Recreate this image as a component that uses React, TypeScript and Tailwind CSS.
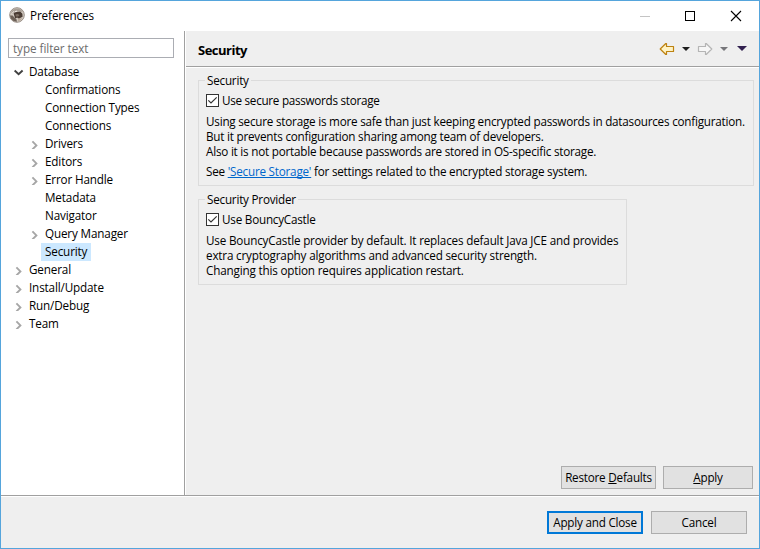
import React from "react";

function Chevron({ open = false }: { open?: boolean }) {
  return open ? (
    <svg width="10" height="10" viewBox="0 0 10 10" fill="none" stroke="#404040" strokeWidth="1.9" className="block">
      <path d="M.6 3.5 4.6 7.3 8.6 3.5" />
    </svg>
  ) : (
    <svg width="10" height="10" viewBox="0 0 10 10" fill="none" stroke="#a6a6a6" strokeWidth="1.9" className="block">
      <path d="M2.4 2.4 6.4 6.4 2.4 10.4" />
    </svg>
  );
}

type Item = { label: string; level: 0 | 1; state?: "open" | "closed"; selected?: boolean };

const items: Item[] = [
  { label: "Database", level: 0, state: "open" },
  { label: "Confirmations", level: 1 },
  { label: "Connection Types", level: 1 },
  { label: "Connections", level: 1 },
  { label: "Drivers", level: 1, state: "closed" },
  { label: "Editors", level: 1, state: "closed" },
  { label: "Error Handle", level: 1, state: "closed" },
  { label: "Metadata", level: 1 },
  { label: "Navigator", level: 1 },
  { label: "Query Manager", level: 1, state: "closed" },
  { label: "Security", level: 1, selected: true },
  { label: "General", level: 0, state: "closed" },
  { label: "Install/Update", level: 0, state: "closed" },
  { label: "Run/Debug", level: 0, state: "closed" },
  { label: "Team", level: 0, state: "closed" },
];

function TreeRow({ item }: { item: Item }) {
  return (
    <li className={`flex h-[18px] items-center ${item.level === 1 ? "pl-[29px]" : "pl-[13px]"}`}>
      <span className="w-[11px] shrink-0">{item.state && <Chevron open={item.state === "open"} />}</span>
      <span className={`h-[18px] px-1 leading-[16px] ${item.selected ? "w-[50px] bg-[#cce8ff]" : ""}`}>{item.label}</span>
    </li>
  );
}

function Checkbox({ label }: { label: string }) {
  return (
    <label className="flex h-[15px] items-center gap-[3px]">
      <svg width="13" height="13" viewBox="0 0 13 13" className="shrink-0">
        <rect x=".5" y=".5" width="12" height="12" fill="#fff" stroke="#333" />
        <path d="M2.3 6.3 5 9 10.7 3.3" fill="none" stroke="#333" strokeWidth="1.2" />
      </svg>
      <span>{label}</span>
    </label>
  );
}

function Group({ title, size, children }: { title: string; size: string; children: React.ReactNode }) {
  return (
    <fieldset className={`relative min-w-0 border border-[#dcdcdc] pl-[7px] ${size}`}>
      <legend className="absolute -top-[9px] left-[6px] bg-[#efefef] px-[2px] leading-[16px]">{title}</legend>
      {children}
    </fieldset>
  );
}

function Button({ children, size, primary }: { children: React.ReactNode; size: string; primary?: boolean }) {
  return (
    <button
      className={`flex h-[23px] items-center justify-center bg-[#e1e1e1] ${size} ${
        primary ? "border-2 border-[#0078d7]" : "border border-[#adadad]"
      }`}
    >
      {children}
    </button>
  );
}

function AppIcon() {
  return (
    <svg width="16" height="16" viewBox="0 0 16 16" className="mb-[2px] block">
      <circle cx="8" cy="8" r="7.3" fill="#d3cbc2" stroke="#9a9088" strokeWidth="1" />
      <path d="M2 5.5C3 3 5.4 1.6 8 1.6c2.6 0 4.8 1.4 5.8 3.6l-3-1-4 .3-3 2z" fill="#a89f96" />
      <path d="M4.6 6.6 6 5.2l5.2-.6 2.2 2.2.2 3-2 1-1.8 1.2-1.6-1.4-2 .8z" fill="#4a3c34" />
      <path d="M1 8.4l2.6.2 1.8 2 2 1.4.6 2.8-3.4-.8L1.8 11.6z" fill="#6c6057" />
      <path d="M6.4 7.6l2.2-.6 2 1-1.4 1.4H7z" fill="#7c6e63" />
      <path d="M8.6 11.2l2.6.2 2-.6-1.4 2.4-2.6 1z" fill="#b9aa9b" />
      <path d="M3.4 6 5 4.2M6 4.8l2-.8" stroke="#f1ece7" strokeWidth="1" />
    </svg>
  );
}

function Arrow({ right = false }: { right?: boolean }) {
  return (
    <svg width="16" height="14" viewBox="0 0 16 14" className={right ? "block -scale-x-100" : "block"}>
      <path
        d="M1.2 7 6.8 1.5H7.5V4.5H14.5V9.5H7.5V12.5H6.8Z"
        fill={right ? "#f7f7f7" : "#fff3c4"}
        stroke={right ? "#b5b5b5" : "#bd8211"}
        strokeWidth="1.2"
        strokeLinejoin="round"
      />
    </svg>
  );
}

function Caret({ fill, wide = false }: { fill: string; wide?: boolean }) {
  return wide ? (
    <svg width="10" height="5" viewBox="0 0 10 5" className="block"><path d="M0 0H10L5 5Z" fill={fill} /></svg>
  ) : (
    <svg width="8" height="4" viewBox="0 0 8 4" className="block"><path d="M0 0H8L4 4Z" fill={fill} /></svg>
  );
}

export default function App() {
  return (
    <div className="flex h-[549px] w-[760px] flex-col overflow-hidden border border-[#55a5dc] bg-[#efefef] font-['Open_Sans','Noto_Sans',sans-serif] text-[11.7px] leading-[15px] tracking-[-0.22px] whitespace-nowrap text-black">
      <header className="flex h-[30px] shrink-0 items-center bg-white pl-2">
        <AppIcon />
        <span className="-mt-px ml-[5px] tracking-[-0.1px]">Preferences</span>
        <svg width="110" height="12" viewBox="0 0 110 12" fill="none" className="-mt-px mr-[14px] ml-auto">
          <path d="M5 6.5h10" stroke="#c4c4c4" />
          <rect x="50.5" y="1.5" width="9" height="9" stroke="#000" />
          <path d="M96 1l10 10M106 1 96 11" stroke="#000" strokeWidth="1.1" />
        </svg>
      </header>

      <div className="flex h-[464px] shrink-0">
        <aside className="w-[183px] shrink-0 bg-white">
          <div className="mt-[7px] ml-[7px] flex h-5 w-[166px] items-center border border-[#abadb3] pt-px pl-1 tracking-[-0.05px] text-[#6d6d6d]">
            type filter text
          </div>
          <ul className="mt-[5px] tracking-[-0.15px]">
            {items.map((item) => (
              <TreeRow key={item.label} item={item} />
            ))}
          </ul>
        </aside>
        <main className="flex min-w-0 flex-1 flex-col border-l border-[#a0a0a0]">
          <div className="flex min-w-0 flex-1 flex-col border-l border-white">
            <div className="flex h-[36px] shrink-0 items-center border-b border-[#a0a0a0] pr-[12px] pl-3">
              <h1 className="pt-[3px] text-[13px] font-bold tracking-[-0.5px]">Security</h1>
              <div className="ml-auto flex items-center">
                <Arrow />
                <span className="ml-[7px]"><Caret fill="#1e1e1e" /></span>
                <span className="ml-[7px]"><Arrow right /></span>
                <span className="ml-[7px]"><Caret fill="#76767a" /></span>
                <span className="ml-[9px]"><Caret wide fill="#31204f" /></span>
              </div>
            </div>
            <div className="flex flex-1 flex-col border-t border-white pt-[12px] pr-[5px] pl-3">
              <Group title="Security" size="h-[106px] w-[556px]">
                <div className="pt-[12px] tracking-[-0.28px]"><Checkbox label="Use secure passwords storage" /></div>
                <p className="mt-[6px]">
                  Using secure storage is more safe than just keeping encrypted passwords in datasources configuration.
                  <br />
                  But it prevents configuration sharing among team of developers.
                  <br />
                  Also it is not portable because passwords are stored in OS-specific storage.
                </p>
                <p className="mt-[5px]">
                  See <a className="text-[#0066cc] underline [text-decoration-skip-ink:none]">'Secure Storage'</a> for settings related to the encrypted storage system.
                </p>
              </Group>
              <Group title="Security Provider" size="mt-[13px] h-[86px] w-[429px]">
                <div className="pt-[12px]"><Checkbox label="Use BouncyCastle" /></div>
                <p className="mt-[6px] tracking-[-0.18px]">
                  Use BouncyCastle provider by default. It replaces default Java JCE and provides
                  <br />
                  extra cryptography algorithms and advanced security strength.
                  <br />
                  Changing this option requires application restart.
                </p>
              </Group>
              <div className="mt-auto mr-px mb-[6px] flex justify-end gap-[7px]">
                <Button size="w-[95px]"><span>Restore <u>D</u>efaults</span></Button>
                <Button size="w-[90px]"><span><u>A</u>pply</span></Button>
              </div>
            </div>
          </div>
        </main>
      </div>

      <footer className="flex-1 border-t border-[#a0a0a0]">
        <div className="flex justify-end gap-2 border-t border-white pt-[14px] pr-3">
          <Button primary size="w-[96px]">Apply and Close</Button>
          <Button size="w-[96px]">Cancel</Button>
        </div>
      </footer>
    </div>
  );
}
